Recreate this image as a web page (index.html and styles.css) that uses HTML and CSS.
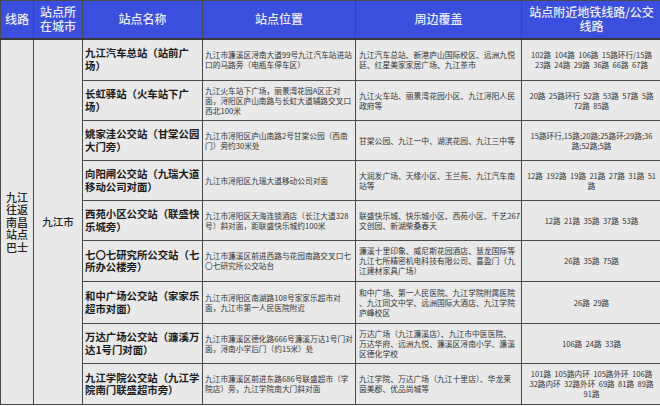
FILE: index.html
```html
<!DOCTYPE html>
<html lang="zh">
<head>
<meta charset="utf-8">
<link rel="stylesheet" href="styles.css">
</head>
<body>
<table class="routes">
  <colgroup>
    <col class="c-line"><col class="c-city"><col class="c-name"><col class="c-loc"><col class="c-around"><col class="c-bus">
  </colgroup>
  <thead>
    <tr class="head">
      <th>线路</th>
      <th class="h-city">站点所在城市</th>
      <th>站点名称</th>
      <th>站点位置</th>
      <th>周边覆盖</th>
      <th class="h-bus">站点附近地铁线路/公交线路</th>
    </tr>
  </thead>
  <tbody>
    <tr class="r1">
      <td class="line" rowspan="9">九江往返南昌站点巴士</td>
      <td class="city" rowspan="9">九江市</td>
      <td class="name">九江汽车总站（站前广场）</td>
      <td class="loc">九江市濂溪区浔南大道99号九江汽车站进站<br>口的马路旁（电瓶车停车区）</td>
      <td class="around">九江汽车总站、新港庐山国际校区、远洲九悦<br>廷、红星美家家居广场、九江茶市</td>
      <td class="bus">102路&nbsp; 104路&nbsp; 106路&nbsp; 15路环行/15路<br>23路&nbsp; 24路&nbsp; 29路&nbsp; 36路&nbsp; 66路&nbsp; 67路</td>
    </tr>
    <tr class="r2">
      <td class="name">长虹驿站（火车站下广场）</td>
      <td class="loc">九江火车站下广场，丽景湾花园A区正对<br>面，浔阳区庐山南路与长虹大道辅路交叉口<br>西北100米</td>
      <td class="around">九江火车站、丽景湾花园小区、九江浔阳人民<br>政府等</td>
      <td class="bus">20路&nbsp; 25路环行&nbsp; 52路&nbsp; 53路&nbsp; 57路&nbsp; 5路<br>72路&nbsp; 85路</td>
    </tr>
    <tr class="r3">
      <td class="name">姚家洼公交站（甘棠公园大门旁）</td>
      <td class="loc">九江市浔阳区庐山南路2号甘棠公园（西南<br>门）旁约30米处</td>
      <td class="around">甘棠公园、九江一中、湖滨花园、九江三中等</td>
      <td class="bus">15路环行,15路;20路;25路环;29路;36<br>路;52路;5路</td>
    </tr>
    <tr class="r4">
      <td class="name">向阳闸公交站（九瑞大道移动公司对面）</td>
      <td class="loc">九江市浔阳区九瑞大道移动公司对面</td>
      <td class="around">大润发广场、天缘小区、玉兰苑、九江汽车南<br>站等</td>
      <td class="bus">12路&nbsp; 192路&nbsp; 19路&nbsp; 21路&nbsp; 27路&nbsp; 31路&nbsp; 51<br>路</td>
    </tr>
    <tr class="r5">
      <td class="name">西苑小区公交站（联盛快乐城旁）</td>
      <td class="loc">九江市浔阳区天海连锁酒店（长江大道328<br>号）斜对面，距联盛快乐城约100米</td>
      <td class="around">联盛快乐城、快乐城小区、西苑小区、千艺267<br>文创园、新湖柴桑春天</td>
      <td class="bus">12路&nbsp; 21路&nbsp; 35路&nbsp; 37路&nbsp; 53路</td>
    </tr>
    <tr class="r6">
      <td class="name">七〇七研究所公交站（七所办公楼旁）</td>
      <td class="loc">九江市濂溪区前进西路与花园南路交叉口七<br>〇七研究所公交站台</td>
      <td class="around">濂溪十里印象、威尼斯花园酒店、慧龙国际等<br>九江七所精密机电科技有限公司、喜盈门（九<br>江建材家具广场）</td>
      <td class="bus">26路&nbsp; 35路&nbsp; 75路</td>
    </tr>
    <tr class="r7">
      <td class="name">和中广场公交站（家家乐超市对面）</td>
      <td class="loc">九江市浔阳区南湖路108号家家乐超市对<br>面，九江市第一人民医院附近</td>
      <td class="around">和中广场、第一人民医院、九江学院附属医院<br>、九江同文中学、远洲国际大酒店、九江学院<br>庐峰校区</td>
      <td class="bus">26路&nbsp; 29路</td>
    </tr>
    <tr class="r8">
      <td class="name">万达广场公交站（濂溪万达1号门对面）</td>
      <td class="loc">九江市濂溪区德化路666号濂溪万达1号门对<br>面，浔南小学后门（约15米）处</td>
      <td class="around">万达广场（九江濂溪店）、九江市中医医院、<br>万达华府、远洲九悦、濂溪区浔南小学、濂溪<br>区德化学校</td>
      <td class="bus">106路&nbsp; 24路&nbsp; 33路</td>
    </tr>
    <tr class="r9">
      <td class="name">九江学院公交站（九江学院南门联盛超市旁）</td>
      <td class="loc">九江市濂溪区前进东路686号联盛超市（学<br>院店）旁，九江学院南大门斜对面</td>
      <td class="around">九江学院、万达广场（九江十里店）、华龙莱<br>茵美郡、优品尚城等</td>
      <td class="bus">101路&nbsp; 105路内环&nbsp; 105路外环&nbsp; 106路<br>32路内环&nbsp; 32路外环&nbsp; 69路&nbsp; 81路&nbsp; 89路<br>91路</td>
    </tr>
  </tbody>
</table>
</body>
</html>
```

FILE: styles.css
```css
html, body {
  margin: 0;
  padding: 0;
  background: #ffffff;
}

.routes {
  width: 661px;
  table-layout: fixed;
  border-collapse: collapse;
  font-family: "Noto Sans CJK SC", "Liberation Sans", sans-serif;
  color: #222;
  background: #e9e9e9;
}

.c-line { width: 33px; }
.c-city { width: 49px; }
.c-name { width: 120px; }
.c-loc { width: 153px; }
.c-around { width: 166px; }
.c-bus { width: 140px; }

.routes th,
.routes td {
  border: 1px solid #4a4a4a;
  padding: 0;
  overflow: hidden;
}

.head {
  height: 38px;
}

.head th {
  background: #3b4fdf;
  color: #eef0ff;
  font-size: 12px;
  font-weight: 500;
  line-height: 14px;
  text-align: center;
  vertical-align: middle;
  border-bottom: 2px solid #3a3a3a;
  word-break: break-all;
}

.routes .h-city {
  padding: 0 4px;
}

.routes .h-bus {
  padding: 0 5px;
}

.r1 { height: 42px; }
.r2, .r3, .r4, .r5, .r8 { height: 40px; }
.r6, .r9 { height: 41px; }
.r7 { height: 42px; }

.routes .line {
  font-size: 11px;
  line-height: 12.5px;
  text-align: center;
  font-weight: 500;
  padding: 0 4px;
  word-break: break-all;
}

.city {
  font-size: 10.5px;
  text-align: center;
  font-weight: 500;
}

.routes .name {
  font-size: 10.4px;
  line-height: 12.5px;
  font-weight: 700;
  padding: 0 0 0 2px;
  word-break: break-all;
  color: #1a1a1a;
}

.routes .loc {
  font-size: 7.7px;
  line-height: 10px;
  padding: 0 0 0 2px;
  white-space: nowrap;
  color: #333;
}

.routes .around {
  font-size: 7.8px;
  line-height: 10px;
  padding: 0 0 0 3px;
  white-space: nowrap;
  color: #333;
}

.routes .bus {
  font-size: 7.6px;
  line-height: 10px;
  text-align: center;
  padding: 0;
  white-space: nowrap;
  color: #333;
}
```
